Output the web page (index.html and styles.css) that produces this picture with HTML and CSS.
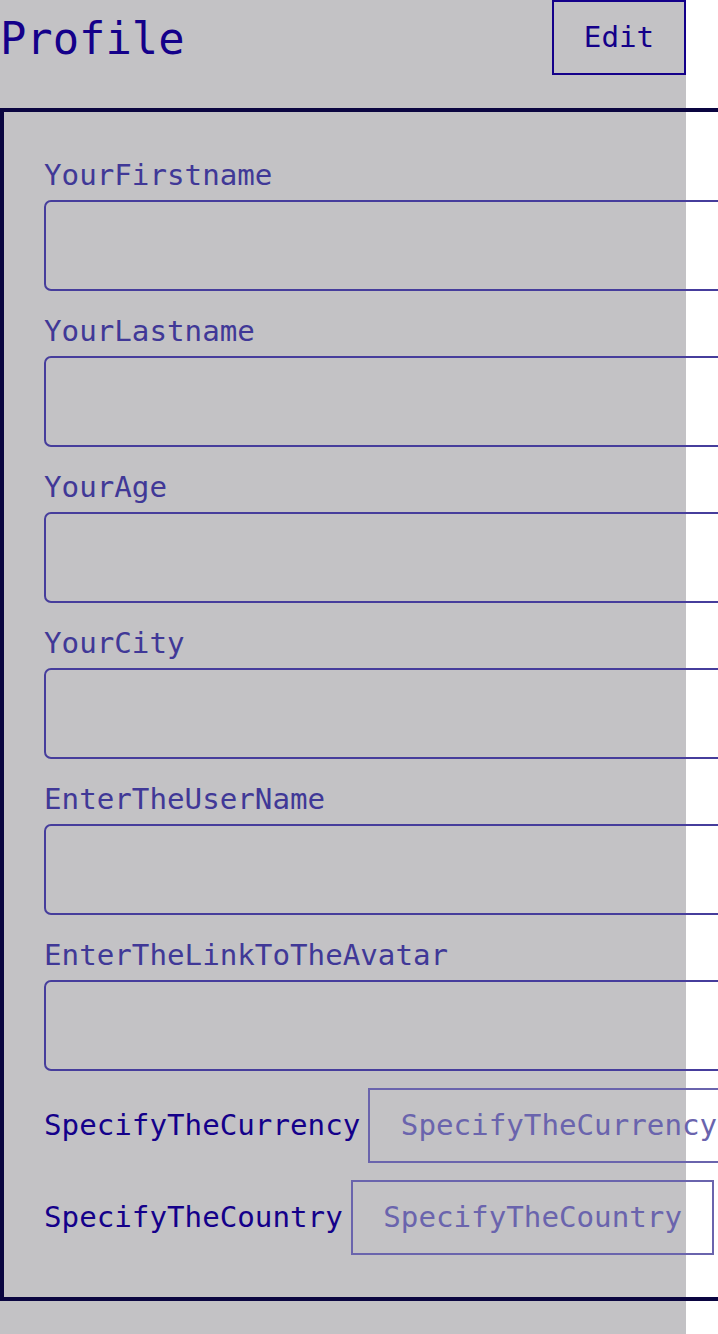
FILE: index.html
```html
<!DOCTYPE html>
<html lang="en">
<head>
<meta charset="utf-8">
<title>Profile</title>
<link rel="stylesheet" href="styles.css">
</head>
<body>
<div class="page">
  <header class="header">
    <h1 class="title">Profile</h1>
    <button class="edit-btn" type="button">Edit</button>
  </header>
  <form class="card">
    <div class="field">
      <label class="field-label">YourFirstname</label>
      <input class="field-input" type="text">
    </div>
    <div class="field">
      <label class="field-label">YourLastname</label>
      <input class="field-input" type="text">
    </div>
    <div class="field">
      <label class="field-label">YourAge</label>
      <input class="field-input" type="text">
    </div>
    <div class="field">
      <label class="field-label">YourCity</label>
      <input class="field-input" type="text">
    </div>
    <div class="field">
      <label class="field-label">EnterTheUserName</label>
      <input class="field-input" type="text">
    </div>
    <div class="field">
      <label class="field-label">EnterTheLinkToTheAvatar</label>
      <input class="field-input" type="text">
    </div>
    <div class="select-row">
      <span class="select-label">SpecifyTheCurrency</span>
      <div class="select-box">SpecifyTheCurrency</div>
    </div>
    <div class="select-row">
      <span class="select-label">SpecifyTheCountry</span>
      <div class="select-box">SpecifyTheCountry</div>
    </div>
  </form>
</div>
</body>
</html>
```

FILE: styles.css
```css
html, body {
  margin: 0;
  padding: 0;
  background: #ffffff;
}

body {
  font-family: "DejaVu Sans Mono", "Liberation Mono", monospace;
  overflow: hidden;
}

.page {
  width: 686px;
  min-height: 1334px;
  background: #c3c2c5;
}

.header {
  display: flex;
  justify-content: space-between;
  align-items: flex-start;
  height: 108px;
}

.title {
  margin: 0;
  padding-top: 14px;
  font-family: "DejaVu Sans Mono", monospace;
  font-weight: normal;
  font-size: 43.8px;
  line-height: 50px;
  color: #14008a;
}

.edit-btn {
  box-sizing: border-box;
  width: 134px;
  height: 75px;
  margin: 0;
  padding: 0;
  border: 2px solid #14008a;
  background: transparent;
  font-family: "DejaVu Sans Mono", monospace;
  font-size: 29.2px;
  line-height: 33.5px;
  color: #14008a;
}

.card {
  box-sizing: border-box;
  width: 780px;
  margin: 0;
  padding: 46.5px 0 42px 40px;
  border: 4px solid #0a0540;
  display: flex;
  flex-direction: column;
  gap: 23.5px;
}

.field {
  display: flex;
  flex-direction: column;
  gap: 8px;
}

.field-label {
  font-size: 29.2px;
  line-height: 33.5px;
  color: #403897;
}

.field-input {
  box-sizing: border-box;
  width: 720px;
  height: 91px;
  margin: 0;
  border: 2px solid #463d9c;
  border-radius: 7px;
  background: transparent;
  font-family: "DejaVu Sans Mono", monospace;
  font-size: 29.2px;
}

.select-row {
  display: flex;
  align-items: center;
  gap: 8px;
  margin-top: -6.5px;
}

.select-label {
  font-size: 29.2px;
  line-height: 33.5px;
  color: #14008a;
  white-space: nowrap;
}

.select-box {
  box-sizing: border-box;
  height: 75px;
  padding: 0 30px 0 30.5px;
  border: 2px solid #6a64ad;
  display: flex;
  align-items: center;
  font-size: 29.2px;
  line-height: 33.5px;
  color: #6a64ad;
  white-space: nowrap;
}
```
